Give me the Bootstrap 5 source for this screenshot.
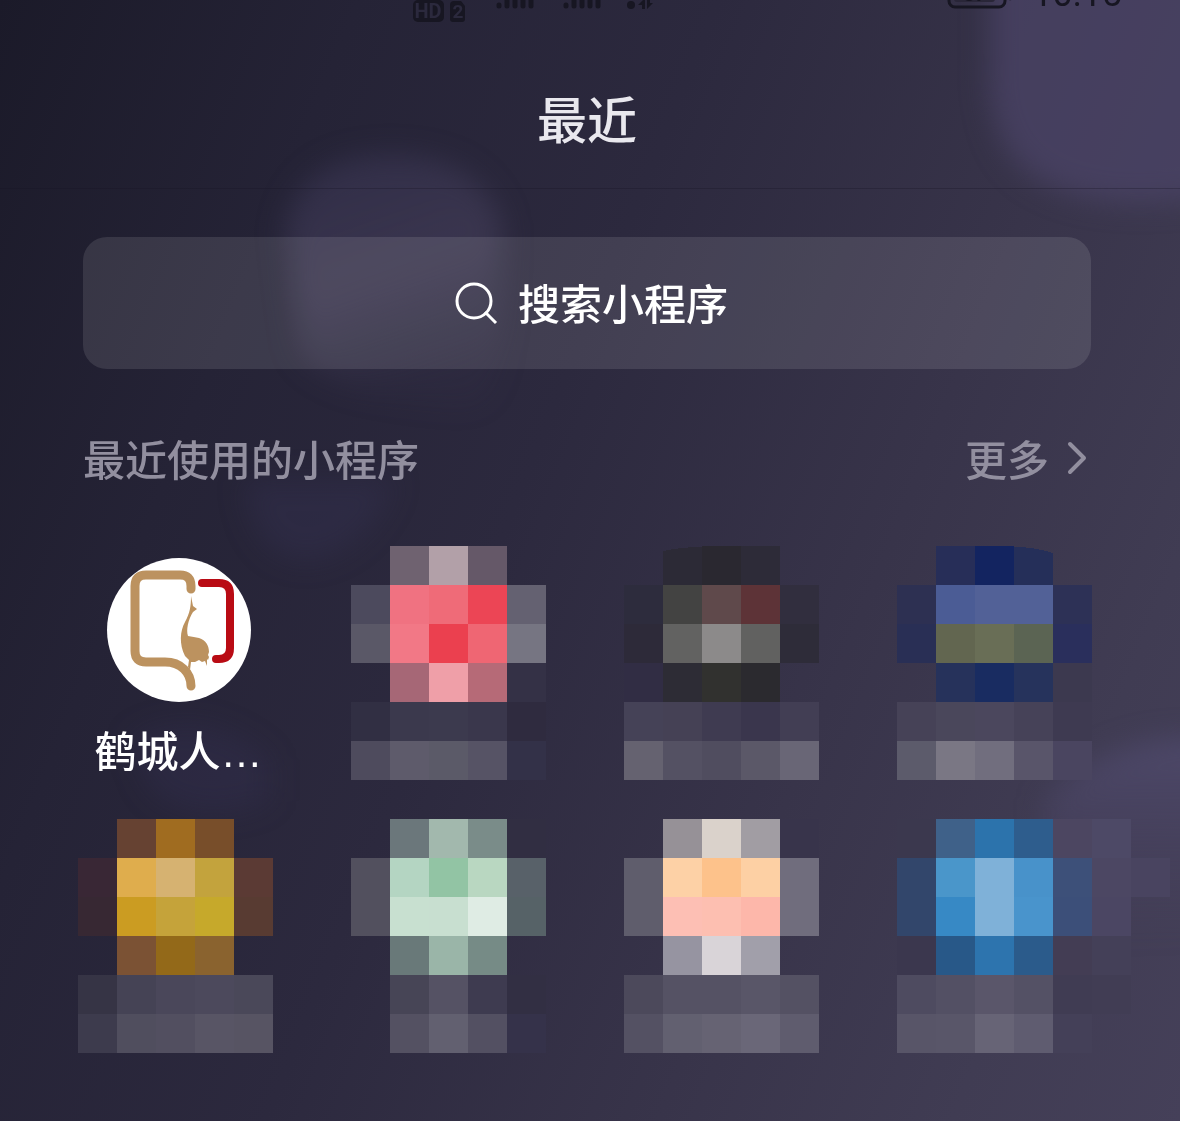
<!DOCTYPE html>
<html lang="zh-CN">
<head>
<meta charset="utf-8">
<meta name="viewport" content="width=device-width, initial-scale=1">
<title>最近</title>
<link href="https://cdn.jsdelivr.net/npm/bootstrap@5.3.0/dist/css/bootstrap.min.css" rel="stylesheet">
<style>
body{min-height:100vh;color:#fff;font-family:"Liberation Sans","Noto Sans CJK SC",sans-serif;font-size:42px;font-weight:500;line-height:60px;background:linear-gradient(112deg,#1b1a29 0%,#252336 22%,#2c293e 44%,#38344a 68%,#403c53 86%,#454059 100%);overflow-x:hidden}
.backdrop-art{position:absolute;inset:0;width:100%;height:100%;z-index:-1}
.phone-status{height:24px;overflow:hidden;padding:0 58px 0 413px;color:#171622}
.clock{font:36px/36px Roboto,sans-serif;margin-top:-24px}
.top-title{height:165px;padding-top:63px;padding-right:6px;border-bottom:1px solid rgba(22,21,36,.3)}
.top-title h1{font-size:50px;line-height:70px;color:#e9e8ee;font-weight:500}
.page-body{padding:48px 89px 0 83px}
.search-btn{height:132px;border-radius:24px;background:rgba(255,255,255,.105);color:#fff;font-size:42px;font-weight:500;line-height:60px;gap:20px;border:0;padding:0 8px 0 16px}
.search-btn span{padding-top:6px}
.search-btn:hover{background:rgba(255,255,255,.18);color:#fff}
.section-line{padding-top:63px;color:#928f9f}
.section-line h2{font-size:42px;line-height:60px;font-weight:500}
.more-link{color:#928f9f;gap:16px}
.more-link svg{margin-bottom:8px}
.app-grid{padding:54px 46px 0 42px}
.app-tile{height:273px;color:#fff}
.app-tile:hover{color:#fff}
.app-logo{margin-top:12px;margin-bottom:21px}
.mosaic{overflow:visible}
</style>
<script src="https://cdn.jsdelivr.net/npm/bootstrap@5.3.0/dist/js/bootstrap.bundle.min.js"></script>
</head>
<body class="position-relative">
<svg class="backdrop-art" viewBox="0 0 1180 1121" preserveAspectRatio="none" aria-hidden="true">
  <defs>
    <filter id="soft" x="-30%" y="-30%" width="160%" height="160%" color-interpolation-filters="sRGB"><feGaussianBlur stdDeviation="14"/></filter>
    <linearGradient id="orb" x1="0" y1="0" x2="0.3" y2="1"><stop offset="0" stop-color="#3c3858" stop-opacity=".5"/><stop offset=".55" stop-color="#46405c" stop-opacity=".6"/><stop offset="1" stop-color="#46405c" stop-opacity=".1"/></linearGradient>
    <linearGradient id="orb2" x1="0" y1="0" x2="0" y2="1"><stop offset="0" stop-color="#514c70" stop-opacity=".75"/><stop offset="1" stop-color="#48415f" stop-opacity="0"/></linearGradient>
  </defs>
  <g filter="url(#soft)">
    <path d="M990-40H1220V195Q1100 215 1040 180 985 150 990 60Z" fill="#4b4568" opacity=".7"/>
    <path d="M285 230Q300 155 390 155 480 155 502 225V330Q500 400 470 405 330 400 300 350Z" fill="url(#orb)"/>
    <path d="M245 480H395Q370 550 310 560 250 560 245 480Z" fill="#38355a" opacity=".3"/>
    <path d="M130 740Q200 700 270 760V800Q200 830 150 790Z" fill="#38355a" opacity=".25"/>
    <path d="M1045 800Q1110 730 1220 740V930L1090 940Q1040 900 1045 800Z" fill="url(#orb2)"/>
  </g>
</svg>

<div class="phone-status d-flex justify-content-between align-items-start">
  <svg width="244" height="24" viewBox="0 0 244 24" fill="#171622" role="img" aria-label="HD 2">
    <rect y="0" width="31" height="22" rx="5"/>
    <path d="M41 1h7l4 5v13q0 3-3 3h-9q-3 0-3-3V5q0-4 4-4Z"/>
    <g font-family="Roboto,sans-serif" font-weight="700" font-size="20" fill="#2b293d" text-anchor="middle"><text x="15" y="18">HD</text><text x="45" y="18" font-size="19">2</text></g>
    <g stroke="#171622" stroke-width="5" stroke-linecap="round">
      <path d="M86 5v1M94-5V6M102-5V6M110-5V6M118-5V6M153 5v1M161-5V6M169-5V6M177-5V6M185-5V6"/>
    </g>
    <circle cx="218" cy="5" r="4"/><path d="M225 5 232-2V9h-3V5ZM234-2h3V3h3l-6 6Z"/>
  </svg>
  <div class="d-flex">
    <svg class="me-3" width="69" height="24" viewBox="0 0 69 24" role="img" aria-label="电量">
      <rect x="2" y="-18" width="56" height="25" rx="6" fill="none" stroke="#171622" stroke-width="3"/>
      <rect x="7" y="-14" width="41" height="16" rx="3" fill="#292638"/>
      <text x="28" y="1" text-anchor="middle" font-family="Roboto,sans-serif" font-size="20" font-weight="700" fill="#171622">37</text>
      <path d="M62-4h3v3q-1 2-3 1Z" fill="#171622"/>
    </svg>
    <time class="clock">10:15</time>
  </div>
</div>

<header class="top-title text-center"><h1 class="mb-0">最近</h1></header>

<main>
  <div class="page-body">
    <button type="button" class="btn search-btn w-100 d-flex align-items-center justify-content-center">
      <svg width="44" height="44" viewBox="0 0 44 44" fill="none" stroke="#fff" stroke-width="3" aria-hidden="true"><circle cx="20" cy="20" r="17"/><path d="m31 31 11 11"/></svg>
      <span>搜索小程序</span>
    </button>
    <div class="section-line d-flex justify-content-between align-items-center">
      <h2 class="mb-0">最近使用的小程序</h2>
      <a href="#" class="more-link d-flex align-items-center text-decoration-none">更多
        <svg width="26" height="36" viewBox="0 0 26 36" fill="none" stroke="#928f9f" stroke-width="4" stroke-linecap="round" stroke-linejoin="round" aria-hidden="true"><path d="m5 4 14 14L5 32"/></svg>
      </a>
    </div>
  </div>
  <div class="app-grid">
    <div class="row row-cols-4 g-0" id="apps">
      <div class="col">
        <a href="#" class="app-tile d-flex flex-column align-items-center text-decoration-none">
          <svg class="app-logo flex-shrink-0" width="144" height="144" viewBox="0 0 144 144" fill="none" aria-hidden="true">
            <circle cx="72" cy="72" r="72" fill="#fff"/>
            <path d="M84 31V28Q84 17 73 17H39Q28 17 28 28V93Q28 104 39 104H58C74 104 84 115 84 128" stroke="#bc925f" stroke-width="9" stroke-linecap="round"/>
            <path d="M95 25H112Q123 25 123 36V90Q123 101 112 101H109" stroke="#b90b14" stroke-width="8" stroke-linecap="round"/>
            <path d="M84 38 86 48 90 51 86 54C81 62 79 72 81 78Q87 79 92 80C99 82 102 88 102 94L101 97 102 99 101 102 100 101V108L98 103 95 104 92 102 88 104 84 104 83 112 81 109 82 102 78 98C72 86 73 73 78 64 83 55 84 48 84 38Z" fill="#bc925f"/>
          </svg>
          <span>鹤城人…</span>
        </a>
      </div>
    </div>
  </div>
</main>

<script>
// Each preview is a grid of 39px cells, five per line; "-" leaves a cell clear.
const previews = [
 ["- #6f6270 #b2a0a8 #655868 -","#4c4a5d #f07281 #ef6b78 #ec4555 #646171","#5a5867 #f27886 #eb404f #ef6673 #767582","- #a66776 #ef9fa8 #b66a77 #343146","#312f43 #3b394d #3c3a4e #3a374c #2f2b3f","#4e4b5d #5e5b6b #5b5a68 #565365 #333148"],
 ["- #2c2a36 #2a2830 #2d2b38 -","#2d2c3d #434342 #5f494b #5d3337 #312e3e","#2d2a39 #626261 #8c8a8a #616160 #2e2c39","#312d44 #2d2c35 #31312f #2b2a2f -","#454257 #454155 #3f3b51 #3a364d #423e54","#656270 #545163 #504d5f #5b5868 #696676"],
 ["- #272e58 #132460 #252f59 -","#2d3052 #4b5c95 #526197 #526197 #2d3156","#292f55 #626650 #696e56 #5b6453 #2a2f5c","- #26325b #192c61 #26335c #3c394f","#464257 #4a475b #4b475d #464258 #3e3a51","#5c5b6b #7a7784 #716e7e #59556a #4a4560"],
 ["- #664232 #a06c20 #784e2a -","#392735 #dfad4d #d6b271 #c3a33d #5b3a34","#372833 #cb9c22 #c5a33a #c6a92b #583b32","- #7b5234 #936919 #8a632f -","#363445 #454355 #4a475a #4c495c #4a4859","#3d3b4d #504e5e #524f60 #585565 #575463"],
 ["- #6b777b #a2b8ad #7a8c89 #312e42","#52505e #b4d5c2 #92c4a4 #b9d7c1 #586169","#52505e #c8e0d0 #c8dfd0 #dfece4 #566267","- #697979 #9ab5a8 #768b86 -","- #474556 #555264 #3e3b50 #322f43","- #545162 #626070 #535062 #35324a"],
 ["- #969197 #dad2cb #a19da3 #38344b","#5f5d6c #fdd1a6 #fdc28b #fdd0a4 #706d7d","#5f5d6c #fdbfb4 #fdbfb1 #fdb7aa #706d7d","- #9694a1 #d9d4d8 #a19faa -","#4c495b #555264 #555264 #595668 #545163","#545163 #626070 #666373 #6a6778 #5f5c6e"],
 ["#3b384e #3f6189 #2c73ac #2e5d8d #4c4661 #4d4966 -","#32466b #4a96ca #7fb1d8 #4892ca #3d5079 #4c4763 #494460","#32466b #3789c5 #7fb1d8 #4994cc #3c4f79 #4b4663 -","#3b374e #285888 #2d74ae #2b5b8b #433d54 #444058","#4e4b60 #535064 #5a566a #545165 #403c53 #413d54","#585568 #595669 #676476 #5f5c70 #444058"]
];
document.getElementById("apps").insertAdjacentHTML("beforeend", previews.map((lines, n) => {
  const cells = lines.map((line, y) => line.split(" ").map((c, x) => {
    if (c === "-") return "";
    if (n === 1 && y === 0 && x === 1) return `<path d="M39 39V5Q57 1 78 1V39Z" fill="${c}"/>`;
    if (n === 2 && y === 0 && x === 3) return `<path d="M117 39V1Q137 1 156 7V39Z" fill="${c}"/>`;
    return `<rect x="${x * 39}" y="${y * 39}" width="39" height="39" fill="${c}"/>`;
  }).join("")).join("");
  return `<div class="col"><a href="#" class="app-tile d-flex flex-column align-items-center" aria-label="小程序"><svg class="mosaic" width="201" height="234" viewBox="0 0 201 234" shape-rendering="crispEdges" aria-hidden="true">${cells}</svg></a></div>`;
}).join(""));
</script>
</body>
</html>
